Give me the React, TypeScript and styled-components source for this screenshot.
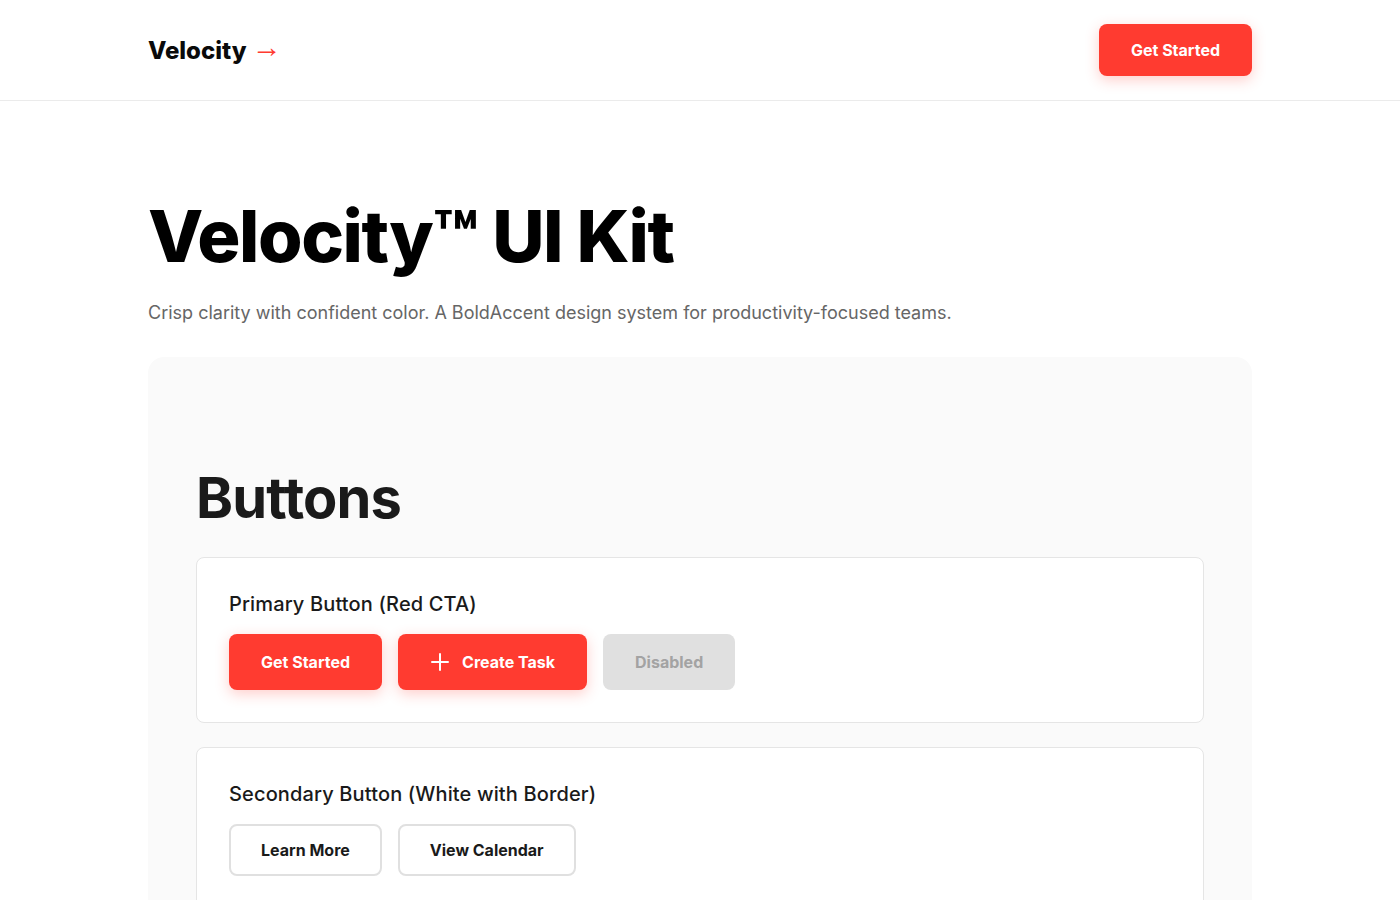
import styled, { createGlobalStyle } from 'styled-components';

const GlobalStyle = createGlobalStyle`
  * {
    box-sizing: border-box;
  }
  body {
    margin: 0;
    background: #ffffff;
    font-family: Inter, 'Noto Sans', sans-serif;
    color: #0a0a0a;
    -webkit-font-smoothing: antialiased;
  }
`;

const RED = '#ff3b30';

const Header = styled.header`
  border-bottom: 1px solid #ebebeb;
`;

const HeaderInner = styled.div`
  width: 1104px;
  margin: 0 auto;
  padding: 24px 0;
  display: flex;
  align-items: center;
  justify-content: space-between;
`;

const Logo = styled.div`
  font-size: 24px;
  font-weight: 800;
  color: #0a0a0a;
  display: flex;
  align-items: center;
  gap: 5px;
`;

const Arrow = styled.span`
  color: ${RED};
  font-family: 'Liberation Sans', Arial, sans-serif;
  font-weight: 400;
  font-size: 30px;
  line-height: 1;
  margin-top: -6px;
`;

const Main = styled.main`
  width: 1104px;
  margin: 0 auto;
  padding-top: 95px;
`;

const Title = styled.h1`
  margin: 0;
  font-size: 72px;
  line-height: 1.1;
  font-weight: 800;
  letter-spacing: -0.02em;
  color: #000;
`;

const Subtitle = styled.p`
  margin: 24px 0 29px;
  font-size: 18px;
  line-height: 1.6;
  color: #666666;
`;

const Panel = styled.section`
  background: #fafafa;
  border-radius: 16px;
  padding: 48px;
`;

const SectionTitle = styled.h2`
  margin: 63px 0 27px;
  font-size: 56px;
  line-height: 1.1;
  font-weight: 700;
  letter-spacing: -0.015em;
  color: #1a1a1a;
`;

const Card = styled.div`
  background: #fff;
  border: 1px solid #e5e5e5;
  border-radius: 8px;
  padding: 32px;
  & + & {
    margin-top: 24px;
  }
`;

const CardTitle = styled.h3`
  margin: 0 0 16px;
  font-size: 20px;
  line-height: 28px;
  font-weight: 500;
  letter-spacing: 0.007em;
  color: #1a1a1a;
`;

const Row = styled.div`
  display: flex;
  gap: 16px;
  align-items: center;
`;

const Button = styled.button<{ $variant?: 'primary' | 'secondary' | 'disabled' }>`
  font-family: inherit;
  font-size: 16px;
  line-height: 24px;
  font-weight: 700;
  border-radius: 8px;
  display: inline-flex;
  align-items: center;
  gap: 12px;
  cursor: pointer;
  ${({ $variant = 'primary' }) =>
    $variant === 'primary'
      ? `
    background: ${RED};
    color: #fff;
    border: none;
    padding: 16px 32px;
    box-shadow: 0 4px 14px rgba(255, 59, 48, 0.25);
  `
      : $variant === 'secondary'
      ? `
    background: #fff;
    color: #1a1a1a;
    border: 2px solid #e0e0e0;
    padding: 12px 30px;
  `
      : `
    background: #e0e0e0;
    color: #a3a3a3;
    border: none;
    padding: 16px 32px;
    cursor: not-allowed;
  `}
`;

const HeaderButton = styled(Button)`
  padding: 14px 32px;
`;

const PlusIcon = () => (
  <svg width="20" height="20" viewBox="0 0 20 20" fill="none" stroke="currentColor" strokeWidth="2" strokeLinecap="round">
    <path d="M10 2v16M2 10h16" />
  </svg>
);

export default function App() {
  return (
    <>
      <GlobalStyle />
      <Header>
        <HeaderInner>
          <Logo>
            Velocity <Arrow>→</Arrow>
          </Logo>
          <HeaderButton>Get Started</HeaderButton>
        </HeaderInner>
      </Header>
      <Main>
        <Title>Velocity™ UI Kit</Title>
        <Subtitle>
          Crisp clarity with confident color. A BoldAccent design system for productivity-focused teams.
        </Subtitle>
        <Panel>
          <SectionTitle>Buttons</SectionTitle>
          <Card>
            <CardTitle>Primary Button (Red CTA)</CardTitle>
            <Row>
              <Button>Get Started</Button>
              <Button>
                <PlusIcon />
                Create Task
              </Button>
              <Button $variant="disabled">Disabled</Button>
            </Row>
          </Card>
          <Card>
            <CardTitle>Secondary Button (White with Border)</CardTitle>
            <Row>
              <Button $variant="secondary">Learn More</Button>
              <Button $variant="secondary">View Calendar</Button>
            </Row>
          </Card>
        </Panel>
      </Main>
    </>
  );
}
